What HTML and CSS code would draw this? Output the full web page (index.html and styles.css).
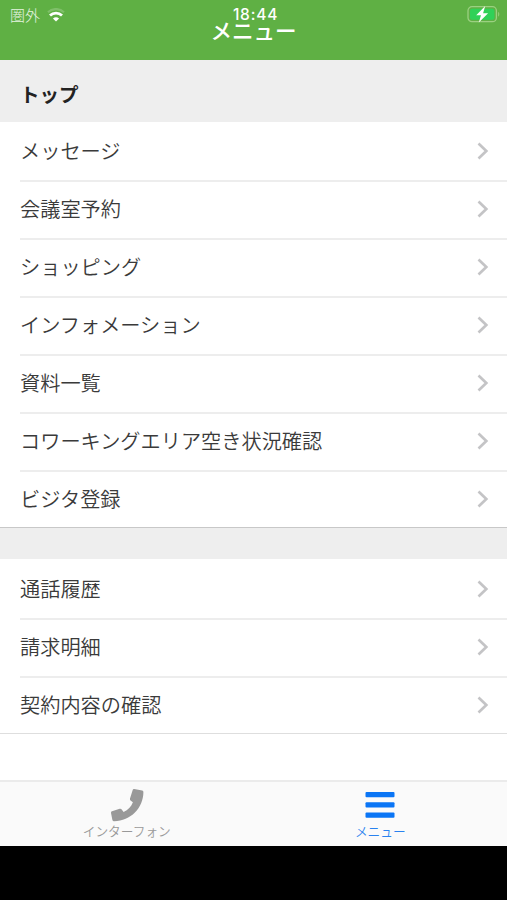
FILE: index.html
```
<!DOCTYPE html>
<html lang="ja">
<head>
<meta charset="utf-8">
<title>メニュー</title>
<link rel="stylesheet" href="styles.css">
</head>
<body>
<svg width="0" height="0" class="defs"><symbol id="chevron" viewBox="0 0 12 18"><path d="M1.500 1.600 9.300 9 1.500 16.400" fill="none" stroke="#c4c4c6" stroke-width="2.700"/></symbol></svg>
<div class="app">
  <header class="header">
    <div class="status">
      <div class="carrier"><span>圏外</span>
        <svg class="wifi" width="18" height="14" viewBox="0 0 18 14" fill="none" stroke="#fff"><path d="M1 4.300a11.500 11.500 0 0 1 16 0" stroke-width="2.200" opacity=".2"/><path d="M3 7.600a8.600 8.600 0 0 1 12 0" stroke-width="2.800"/><path d="M9 13.400 5.900 10.600a4.500 4.500 0 0 1 6.200 0z" fill="#fff" stroke="none"/></svg>
      </div>
      <div class="time">18:44</div>
      <svg class="battery" width="34" height="18" viewBox="0 0 34 18"><rect x="1" y="1.700" width="28.400" height="15" rx="4" fill="none" stroke="#9bd081" stroke-width="1.300"/><rect x="3" y="3.700" width="24.400" height="11" rx="2" fill="#30d158"/><path d="M31.200 7v4.500c1.400-.6 1.400-3.900 0-4.500z" fill="#9bd081"/><path d="m18.200 1-9 9.200h4.800l-2.200 7.400 9.300-9.400h-5z" fill="#fff"/></svg>
    </div>
    <h1 class="title">メニュー</h1>
  </header>
  <main class="content">
    <h2 class="section-title">トップ</h2>
    <ul class="list">
      <li class="row"><span>メッセージ</span><svg class="chevron"><use href="#chevron"/></svg></li>
      <li class="row"><span>会議室予約</span><svg class="chevron"><use href="#chevron"/></svg></li>
      <li class="row"><span>ショッピング</span><svg class="chevron"><use href="#chevron"/></svg></li>
      <li class="row"><span>インフォメーション</span><svg class="chevron"><use href="#chevron"/></svg></li>
      <li class="row"><span>資料一覧</span><svg class="chevron"><use href="#chevron"/></svg></li>
      <li class="row"><span>コワーキングエリア空き状況確認</span><svg class="chevron"><use href="#chevron"/></svg></li>
      <li class="row"><span>ビジタ登録</span><svg class="chevron"><use href="#chevron"/></svg></li>
    </ul>
    <div class="gap"></div>
    <ul class="list list-end">
      <li class="row"><span>通話履歴</span><svg class="chevron"><use href="#chevron"/></svg></li>
      <li class="row"><span>請求明細</span><svg class="chevron"><use href="#chevron"/></svg></li>
      <li class="row"><span>契約内容の確認</span><svg class="chevron"><use href="#chevron"/></svg></li>
    </ul>
  </main>
  <nav class="tabs">
    <div class="tab">
      <svg width="34" height="34" viewBox="0 0 34 34"><path d="M24.200 1 32.200 2.600Q33.400 2.900 33.400 4.100C33.400 20 20.500 33.300 4 33.200Q2.800 33.200 2.400 32L1 24.900Q.8 23.600 2 23.200L9.700 20.700Q11 20.400 11.700 21.400L13.600 24C18.200 21.800 21 18.900 22.900 14.300L20.500 12.400Q19.600 11.600 20 10.400L22.700 1.900Q23.100.8 24.200 1z" fill="#999"/></svg>
      <span>インターフォン</span>
    </div>
    <div class="tab active">
      <svg width="34" height="34" viewBox="0 0 34 34" fill="#0a75f5"><rect x="2.500" y="4.100" width="29" height="5.200" rx="1"/><rect x="2.500" y="14.300" width="29" height="5.200" rx="1"/><rect x="2.500" y="24.500" width="29" height="5.200" rx="1"/></svg>
      <span>メニュー</span>
    </div>
  </nav>
</div>
</body>
</html>
```
FILE: styles.css
```
* { box-sizing: border-box; }
body { margin: 0; background: #000; font-family: "Noto Sans CJK JP", sans-serif; color: #3a3a3a; }
.defs { position: absolute; }
.app { height: 846px; display: flex; flex-direction: column; background: #fff; }
.header { height: 60px; background: #5fb044; color: #fff; }
.status { height: 20px; padding: 5px 6px 0 10px; display: grid; grid-template-columns: 1fr auto 1fr; align-items: start; }
.carrier { display: flex; align-items: center; gap: 7px; font-size: 15px; font-weight: 300; line-height: 20px; height: 20px; color: #e6f4e0; }
.wifi { display: block; }
.time { font-family: Inter, sans-serif; font-size: 15.500px; line-height: 16px; padding-top: 2px; font-weight: 500; letter-spacing: .8px; }
.battery { justify-self: end; }
.title { margin: 0; height: 20px; line-height: 20px; font-size: 21.500px; font-weight: 500; text-align: center; }
.content { flex: 1; }
.section-title { margin: 0; height: 62px; padding: 3px 20px 0; line-height: 61px; font-size: 19.500px; font-weight: 700; color: #222; background: #eee; }
.list { margin: 0; padding: 0 0 0 20px; list-style: none; border-bottom: 1px solid #c8c8c8; }
.list-end { border-bottom-color: #dedede; }
.row { height: 58px; padding: 0 18px 2px 0; display: flex; align-items: center; justify-content: space-between; font-size: 20.200px; font-weight: 350; line-height: 30px; border-bottom: 2px solid #ededed; }
.row:first-child { height: 60px; padding-bottom: 0; }
.row:last-child { height: 55px; padding: 0 18px 1px 0; border-bottom: 0; }
.list-end .row:first-child { height: 61px; }
.row span { white-space: nowrap; }
.chevron { width: 12px; height: 18px; }
.gap { height: 31px; background: #eee; }
.tabs { height: 66px; flex: none; display: flex; background: #fafafa; border-top: 2px solid #ebebeb; }
.tab { flex: 1; padding-top: 6px; display: flex; flex-direction: column; align-items: center; font-size: 12.700px; font-weight: 350; line-height: 17px; color: #999; }
.tab svg { display: block; }
.tab.active { color: #2a82ef; }
```
